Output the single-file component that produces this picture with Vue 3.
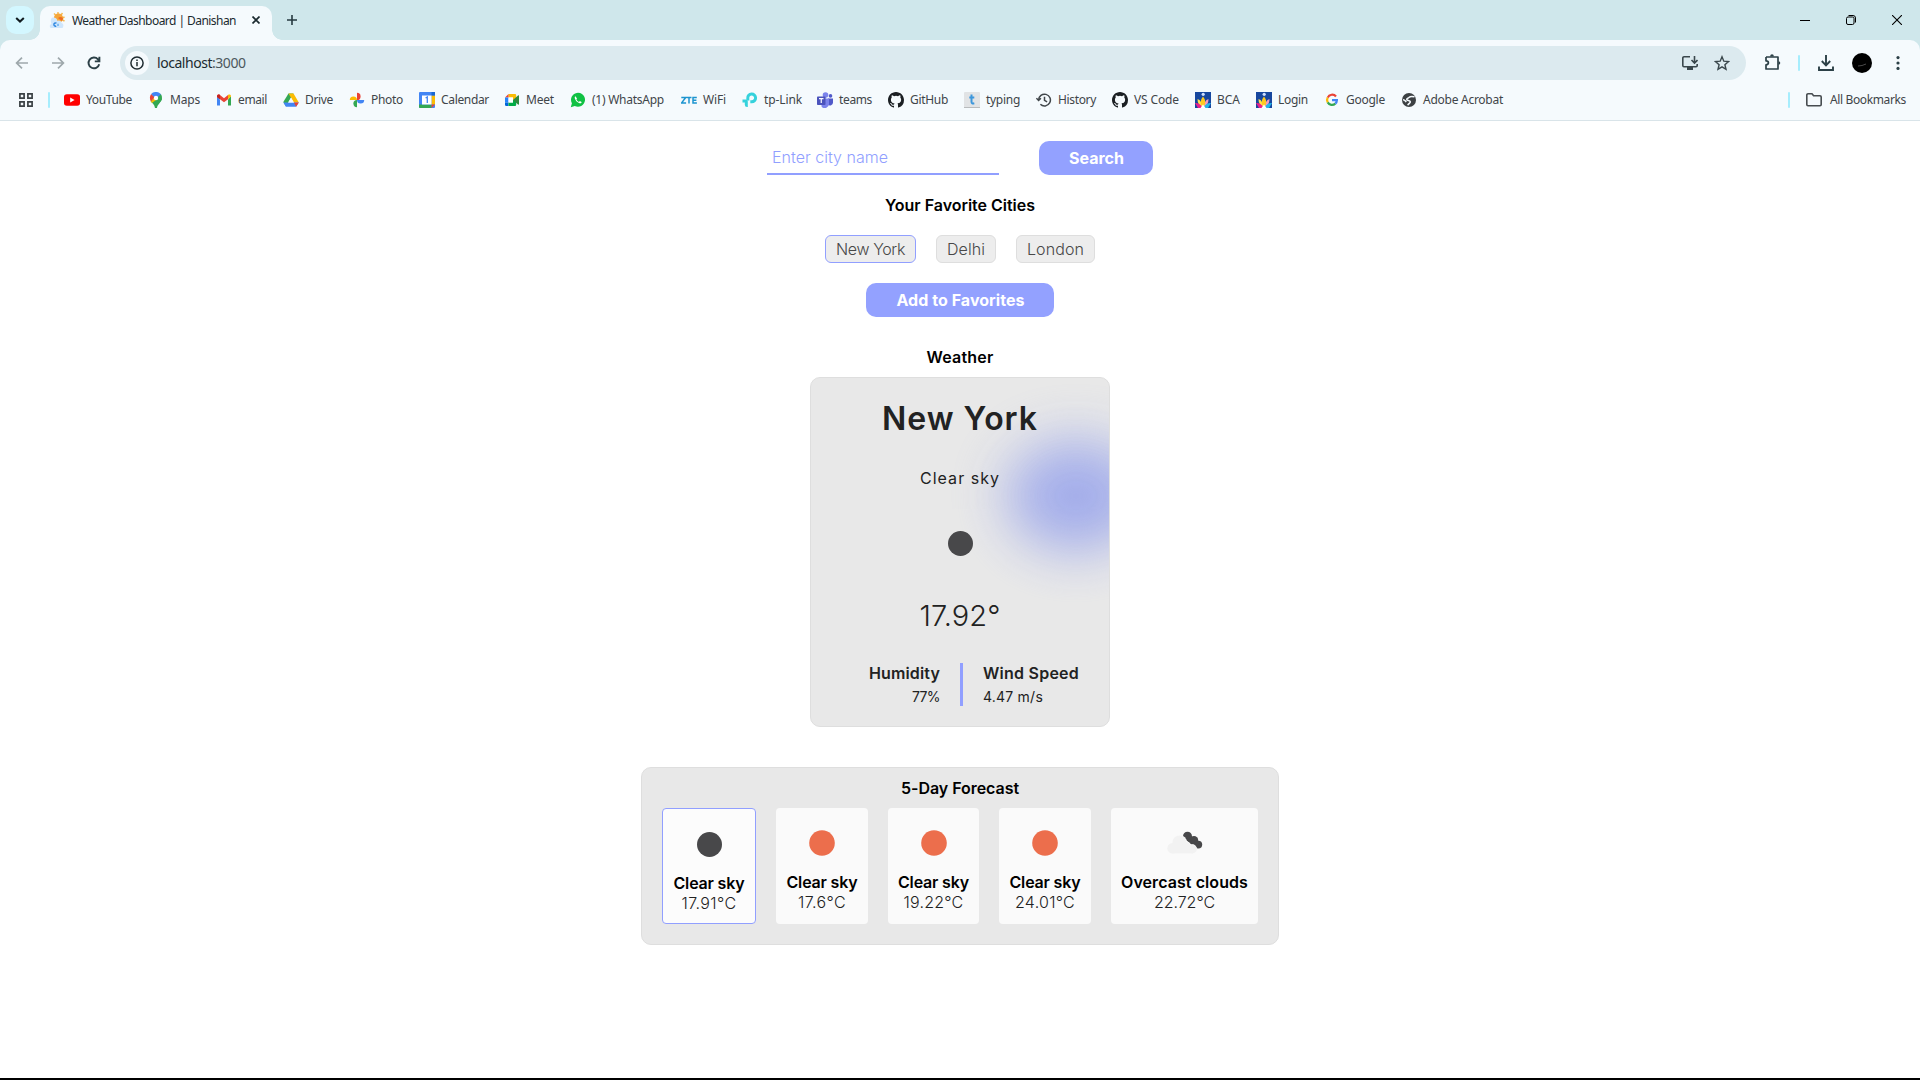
<script setup>
const fitText = (el, width) => {
  el.style.letterSpacing = '0px'
  const range = document.createRange()
  range.selectNodeContents(el)
  const natural = range.getBoundingClientRect().width
  const count = el.textContent.trim().length
  el.style.letterSpacing = ((width - natural) / count).toFixed(3) + 'px'
}
const vFit = {
  mounted(el, binding) {
    fitText(el, binding.value)
    document.fonts.ready.then(() => fitText(el, binding.value))
  },
}

const bookmarks = [
  { icon: 'youtube', label: 'YouTube', width: 84, text: 46 },
  { icon: 'maps', label: 'Maps', width: 68, text: 30 },
  { icon: 'gmail', label: 'email', width: 67, text: 29 },
  { icon: 'drive', label: 'Drive', width: 66, text: 28 },
  { icon: 'photos', label: 'Photo', width: 70, text: 32 },
  { icon: 'calendar', label: 'Calendar', width: 85, text: 48 },
  { icon: 'meet', label: 'Meet', width: 66, text: 28 },
  { icon: 'whatsapp', label: '(1) WhatsApp', width: 111, text: 72 },
  { icon: 'zte', label: 'WiFi', width: 61, text: 23 },
  { icon: 'tplink', label: 'tp-Link', width: 75, text: 38 },
  { icon: 'teams', label: 'teams', width: 71, text: 33 },
  { icon: 'github', label: 'GitHub', width: 76, text: 38 },
  { icon: 'typing', label: 'typing', width: 72, text: 34 },
  { icon: 'history', label: 'History', width: 76, text: 38 },
  { icon: 'github', label: 'VS Code', width: 83, text: 45 },
  { icon: 'college', label: 'BCA', width: 61, text: 23 },
  { icon: 'college', label: 'Login', width: 68, text: 30 },
  { icon: 'google', label: 'Google', width: 77, text: 39 },
  { icon: 'globe', label: 'Adobe Acrobat', width: 110, text: 80 },
]

const cities = [
  { name: 'New York', width: 91, text: 69, active: true },
  { name: 'Delhi', width: 60, text: 38 },
  { name: 'London', width: 79, text: 57 },
]

const days = [
  { icon: 'moon', label: 'Clear sky', temp: '17.91°C', width: 94, text: 71, tempWidth: 55, active: true },
  { icon: 'sun', label: 'Clear sky', temp: '17.6°C', width: 92, text: 71, tempWidth: 48 },
  { icon: 'sun', label: 'Clear sky', temp: '19.22°C', width: 91, text: 71, tempWidth: 60 },
  { icon: 'sun', label: 'Clear sky', temp: '24.01°C', width: 92, text: 71, tempWidth: 60 },
  { icon: 'clouds', label: 'Overcast clouds', temp: '22.72°C', width: 147, text: 127, tempWidth: 61 },
]
</script>

<template>
  <div class="screen">
    <header class="browser">
      <div class="tabstrip">
        <button class="tab-search">
          <svg width="10" height="6" viewBox="0 0 10 6"><path d="M1.2 1l3.8 3.6L8.800 1" fill="none" stroke="#111c20" stroke-width="2" /></svg>
        </button>
        <div class="tab">
          <svg class="favicon" width="16" height="16" viewBox="0 0 16 16">
            <g stroke="#f5b94e" stroke-width="1.4"><path d="M9 0v3M5 1.500l2 2M13.500 1l-1.500 2M15.500 5l-2 1M15.500 9l-2-1" /></g>
            <circle cx="9.500" cy="6" r="4.600" fill="#f6a63a" />
            <path d="M9 6c2-2 5-1 5 1l-1 2z" fill="#ee6c22" />
            <path d="M1.500 16c-1.500-2-.5-3.500 1-4C1 8 2 5.500 4.500 5.500S8 7 8.500 9c2-1 4 0 4 2 2 .3 2.500 3 1 5z" fill="#cfe6fc" />
            <path d="M7.500 11.200c-1.500-.7-2.600.2-2.600 1.400s1.100 1.900 2.300 1.400" fill="none" stroke="#2d86e0" stroke-width="1.400" />
            <path d="M9 11.800v2.200" stroke="#58a8ee" stroke-width="1.300" />
          </svg>
          <span class="tab-title"><span v-fit="164">Weather Dashboard | Danishan</span></span>
          <svg width="8" height="8" viewBox="0 0 8 8"><path d="M.5.5l7 7M7.500.5l-7 7" stroke="#1b2a2f" stroke-width="1.700" /></svg>
        </div>
        <svg class="new-tab" width="10" height="10" viewBox="0 0 10 10"><path d="M5 0v10M0 5h10" stroke="#263a40" stroke-width="1.600" /></svg>
        <div class="window-controls">
          <svg width="10" height="10" viewBox="0 0 10 10"><path d="M0 5.500h10" stroke="#000" /></svg>
          <svg width="10" height="10" viewBox="0 0 10 10" fill="none" stroke="#000"><rect x=".5" y="2" width="7.500" height="7.500" rx="1.500" /><path d="M2.500.5H7a2.500 2.500 0 0 1 2.500 2.500v4.500" /></svg>
          <svg width="10" height="10" viewBox="0 0 10 10"><path d="M0 0l10 10M10 0L0 10" stroke="#000" stroke-width="1.100" /></svg>
        </div>
      </div>

      <div class="toolbar">
        <div class="nav">
          <svg width="16" height="16" viewBox="0 0 16 16" fill="none" stroke="#9ea8ac" stroke-width="1.700"><path d="M14 8H3M8 2.600L2.600 8 8 13.400" /></svg>
          <svg width="16" height="16" viewBox="0 0 16 16" fill="none" stroke="#9ea8ac" stroke-width="1.700"><path d="M2 8h11M8 2.600L13.400 8 8 13.400" /></svg>
          <svg width="16" height="16" viewBox="0 0 16 16" fill="none" stroke="#2c4047" stroke-width="1.900"><path d="M13.200 9.200A5.400 5.400 0 1 1 12 4.300L13.500 6M13.400 1.800v4.600H8.800" /></svg>
        </div>
        <div class="omnibox">
          <span class="site-info">
            <svg width="14" height="14" viewBox="0 0 14 14"><circle cx="7" cy="7" r="6.100" fill="none" stroke="#1f2c31" stroke-width="1.500" /><path d="M7 6v4.300M7 3.500v1.600" stroke="#1f2c31" stroke-width="1.500" /></svg>
          </span>
          <span class="url" v-fit="88.500">localhost<span class="port">:3000</span></span>
          <svg class="install" width="16" height="14" viewBox="0 0 16 14" fill="none" stroke="#3a474c" stroke-width="1.600"><path d="M8 .8H2A1.200 1.200 0 0 0 .8 2v7.500a1.200 1.200 0 0 0 1.200 1.200h12a1.200 1.200 0 0 0 1.200-1.200V8M12.500 0v6.500M9.500 4l3 3 3-3" /><path d="M5 12.500h6" stroke-width="3" /></svg>
          <svg width="16" height="16" viewBox="0 0 16 16"><path d="M8 1.800l1.800 4.400 4.700.4-3.600 3.100 1.100 4.600L8 11.800l-4 2.500 1.100-4.600-3.600-3.100 4.700-.4z" fill="none" stroke="#3a474c" stroke-width="1.400" /></svg>
        </div>
        <svg class="puzzle" width="18" height="18" viewBox="0 0 18 18"><path d="M2 4h4.500M10 4h4v4M14 11v5H2v-4.200c3.200-.2 3.200-3.900 0-4V4M6 4h4M14 8v3" fill="none" stroke="#2c4047" stroke-width="1.700" stroke-linejoin="round" /><path d="M6.200 3.500V3a1.800 1.800 0 0 1 3.600 0v.5zM14.500 8.200a1.800 1.800 0 0 1 0 3.600z" fill="#2c4047" /></svg>
        <i class="divider"></i>
        <svg class="download" width="16" height="16" viewBox="0 0 16 16" fill="none" stroke="#2c4047" stroke-width="1.900"><path d="M8 0v10M3.800 6L8 10.300 12.200 6M1 11.500V15h14v-3.500" /></svg>
        <svg class="avatar" width="20" height="20" viewBox="0 0 20 20"><circle cx="10" cy="10" r="10" /><path d="M6 13q4 0 8-2" stroke="#4a4a4a" fill="none" /></svg>
        <svg class="dots" width="4" height="14" viewBox="0 0 4 14" fill="#2c4047"><circle cx="2" cy="1.600" r="1.600" /><circle cx="2" cy="7" r="1.600" /><circle cx="2" cy="12.400" r="1.600" /></svg>
      </div>

      <nav class="bookmarks">
        <svg class="apps" width="14" height="14" viewBox="0 0 14 14" fill="none" stroke="#3b4246" stroke-width="1.700"><path d="M.9.9h4.200v4.200H.9zM8.900.9h4.200v4.200H8.900zM.9 8.900h4.200v4.200H.9zM8.900 8.900h4.200v4.200H8.900z" /></svg>
        <i class="divider"></i>
        <div class="bookmark-list">
          <a v-for="b in bookmarks" :key="b.label" class="bookmark" :style="{ width: b.width + 'px' }">
            <svg width="16" height="16" viewBox="0 0 16 16">
              <template v-if="b.icon === 'youtube'"><rect y="2.200" width="16" height="11.600" rx="2.800" fill="#f00" /><path d="M6.200 5.500v5L10.600 8z" fill="#fff" /></template>
              <template v-else-if="b.icon === 'maps'">
                <path d="M2.600 9C4 11.300 6.500 12 7 16h2c.4-4 5-6 5-10z" fill="#34a853" />
                <path d="M2.600 9L12.500 1.800C15 4.500 14 8 12 10L8 13z" fill="#34a853" />
                <path d="M3.200 1.900L7 5 3 9.500C1.500 7 1.500 4 3.200 1.900z" fill="#ea4335" />
                <path d="M3 9.500l7.500-8L8 8l-4.200 3z" fill="#fbbc04" />
                <path d="M3.200 1.900C6-1 11-.5 12.800 2.300L8 7 6 5z" fill="#4285f4" />
                <circle cx="8" cy="6" r="2.200" fill="#fff" />
              </template>
              <template v-else-if="b.icon === 'gmail'"><path d="M1 4v9.500h3V7.500z" fill="#4285f4" /><path d="M15 4v9.500h-3V7.500z" fill="#34a853" /><path d="M1 4.500C1 2.500 2.800 2 4 3l4 3.200L12 3v4.200L8 10.200 4 7.200 1 5z" fill="#ea4335" /><path d="M12 3c1.200-1 3-.5 3 1.500L12 7.200z" fill="#fbbc04" /><path d="M1 5v-.5C1 2.500 2.800 2 4 3v4.200z" fill="#c5221f" /></template>
              <template v-else-if="b.icon === 'drive'"><path d="M5.500 1.500h5L3 14.500.3 10z" fill="#34a853" /><path d="M5.500 1.500h5l5.300 9h-5z" fill="#fbbc04" /><path d="M.3 10.500h15.500L13 14.700H3z" fill="#4285f4" /><path d="M8 5.500l2.900 5H5.100z" fill="#f5fafd" /><path d="M10.900 10.500h4.900l-2.600 4.200z" fill="#ea4335" /></template>
              <template v-else-if="b.icon === 'photos'"><path d="M8 8V.8A3.600 3.600 0 0 1 8 8z" fill="#ea4335" /><path d="M8 8h7.200A3.600 3.600 0 0 1 8 8z" fill="#4285f4" /><path d="M8 8v7.200A3.600 3.600 0 0 1 8 8z" fill="#34a853" /><path d="M8 8H.8A3.600 3.600 0 0 1 8 8z" fill="#fbbc04" /></template>
              <template v-else-if="b.icon === 'calendar'"><rect width="16" height="16" rx="1" fill="#4285f4" /><path d="M12.500 3.500H16v9h-3.500z" fill="#fbbc04" /><path d="M0 12.500h12.500V16H1a1 1 0 0 1-1-1z" fill="#34a853" /><path d="M12.500 12.500H16L12.500 16z" fill="#ea4335" /><path d="M12.500 0H16v3.500h-3.500z" fill="#1967d2" /><path d="M3 3.500h9.500v9H3z" fill="#fff" /><path d="M6.600 6l1.700-1v6" fill="none" stroke="#4285f4" stroke-width="1.300" /></template>
              <template v-else-if="b.icon === 'meet'"><path d="M4.500 2H11a1.200 1.200 0 0 1 1.200 1.200V7L9 8V5.500H4.500z" fill="#fbbc04" /><path d="M4.500 2v3.500H1z" fill="#ea4335" /><path d="M1 5.500h3.500v5H1z" fill="#2684fc" /><path d="M1 10.500h3.500V14H2.200A1.200 1.200 0 0 1 1 12.800z" fill="#0066da" /><path d="M4.500 10.500H9V8l3.200-1v5.800A1.200 1.200 0 0 1 11 14H4.500z" fill="#00ac47" /><path d="M9 8l5-4.500c.6-.4 1-.2 1 .4v8.200c0 .6-.4.8-1 .4z" fill="#2f8a3e" /><path d="M4.500 5.500H9v5H4.500z" fill="#fff" /></template>
              <template v-else-if="b.icon === 'whatsapp'"><path d="M.8 15.200l1.100-4A7 7 0 1 1 4.800 14z" fill="#10c143" /><path d="M5.400 4.200c-1.700 1 .2 4.400 2 5.800 2 1.500 4.200 2 4.200 0L9.800 9 9 9.900C7.800 9.400 7 8.500 6.400 7.400l.6-1z" fill="#fff" /></template>
              <template v-else-if="b.icon === 'zte'"><path d="M.3 5.500h4.400L.5 11h4.600M5.500 5.500h5M8 5.500v6M15.800 5.500H12V11h3.900M12 8.200h3.400" fill="none" stroke="#1c94cf" stroke-width="1.500" /></template>
              <template v-else-if="b.icon === 'tplink'"><path d="M5.800 8.500V6.200A3.900 3.900 0 1 1 9.700 9.800H8.300" fill="none" stroke="#35d2dc" stroke-width="3" /><path d="M.5 7.500h3.300a2 2 0 0 1 2 2V15h-.7a2.300 2.300 0 0 1-2.300-2.300V10.600H.5z" fill="#35d2dc" /></template>
              <template v-else-if="b.icon === 'teams'"><circle cx="8.500" cy="3" r="2.800" fill="#7b83eb" /><circle cx="13.500" cy="3.900" r="1.800" fill="#5059c9" /><path d="M11 6.500h5v4.300a3 3 0 0 1-5 2z" fill="#5059c9" /><path d="M4.500 6.500H12v5a4.200 4.200 0 0 1-7.500 3z" fill="#7b83eb" /><rect y="4.500" width="8.500" height="8.500" rx=".8" fill="#4b53bc" /><path d="M2 6.700h4.500M4.250 6.700V11" stroke="#fff" stroke-width="1.200" /></template>
              <template v-else-if="b.icon === 'github'"><path fill="#1b1f23" d="M8 0C3.580 0 0 3.580 0 8c0 3.540 2.290 6.530 5.470 7.590.4.070.55-.17.55-.38 0-.19-.01-.82-.01-1.490-2.010.37-2.530-.49-2.690-.94-.09-.23-.48-.94-.82-1.130-.28-.15-.68-.52-.01-.53.63-.01 1.080.58 1.230.82.72 1.210 1.870.87 2.330.66.07-.52.28-.87.51-1.070-1.780-.2-3.640-.89-3.640-3.950 0-.87.31-1.590.82-2.150-.08-.2-.36-1.020.08-2.120 0 0 .67-.21 2.200.82a7.600 7.600 0 0 1 4 0c1.530-1.040 2.200-.82 2.200-.82.44 1.100.16 1.920.08 2.120.51.56.82 1.270.82 2.150 0 3.070-1.870 3.750-3.650 3.950.29.25.54.73.54 1.480 0 1.070-.01 1.930-.01 2.200 0 .21.15.46.55.38A8 8 0 0 0 16 8c0-4.420-3.580-8-8-8z" /></template>
              <template v-else-if="b.icon === 'typing'"><rect width="16" height="16" rx="1" fill="#e1e3e5" /><path d="M0 15.500h16" stroke="#b8bbbd" /><path d="M7.500 2.500v7.200c0 1.700 1 2 2.800 1.600M5.300 5.500h5" fill="none" stroke="#3c97dc" stroke-width="2" /></template>
              <template v-else-if="b.icon === 'history'"><path d="M2.600 8A5.900 5.900 0 1 1 4.400 12.300M.4 6.200l2.200 2.300 2.300-2.300M8.500 4.700V8.300l2.600 1.600" fill="none" stroke="#40464a" stroke-width="1.500" /></template>
              <template v-else-if="b.icon === 'college'"><path d="M0 0h16v16H0z" fill="#17479e" /><circle cx="8.200" cy="2.300" r="1.600" fill="#cfe0ff" /><path d="M2.500 7c3 1 4.500 4 5 8.500C4 14 2.500 11 2.500 7z" fill="#ffe14d" /><path d="M13.500 7c-3 1-4.500 4-5 8.500 3.500-1.500 5-4.500 5-8.500z" fill="#f59ac0" /><path d="M8 4.500c3 4 3 7 0 11-3-4-3-7 0-11z" fill="#ffcb1f" /><path d="M0 11c3 0 6 1 7.500 5H3z" fill="#e9208c" /><path d="M16 11c-3 0-6 1-7.500 5H13z" fill="#22b5e8" /><path d="M5.500 16L8 12.500l2.500 3.500z" fill="#fff" /></template>
              <template v-else-if="b.icon === 'google'"><g fill="none" stroke-width="2.200"><path d="M12 4.500A4.900 4.900 0 0 0 3.700 5.600" stroke="#ea4335" /><path d="M3.700 5.600a5 5 0 0 0 0 4.800" stroke="#fbbc04" /><path d="M3.700 10.400a4.900 4.900 0 0 0 7.600 1.200" stroke="#34a853" /><path d="M11.300 11.600C12.500 10.500 12.900 9.500 12.900 8.200H8" stroke="#4285f4" /></g></template>
              <template v-else><circle cx="8" cy="8" r="7" fill="#3c4043" /><path d="M13.500 4.800C11 4.300 9.500 4 8.300 5.200 7 6.500 5.500 6 5.800 7.600c.3 1.300 3.300.5 3.500 2.300.1 1.300-1.800 1.300-2.500 3.300M2 7.700c1.800 0 2.300 1.300 3.300 2.300" fill="none" stroke="#f5fafd" stroke-width="1.600" /></template>
            </svg>
            <span v-fit="b.text">{{ b.label }}</span>
          </a>
        </div>
        <i class="divider"></i>
        <svg class="folder" width="16" height="14" viewBox="0 0 16 14"><path d="M.8 2A1.200 1.200 0 0 1 2 .8h4l1.600 2H14a1.200 1.200 0 0 1 1.200 1.200v7.500A1.200 1.200 0 0 1 14 12.700H2a1.200 1.200 0 0 1-1.200-1.200z" fill="none" stroke="#474c50" stroke-width="1.600" /></svg>
        <span class="all" v-fit="76">All Bookmarks</span>
      </nav>
    </header>

    <main class="page">
      <div class="search-row">
        <div class="city-input"><span v-fit="116">Enter city name</span></div>
        <button class="primary search"><span v-fit="55">Search</span></button>
      </div>
      <h2 class="heading"><span v-fit="150">Your Favorite Cities</span></h2>
      <div class="cities">
        <span v-for="c in cities" :key="c.name" class="chip" :class="{ active: c.active }" :style="{ width: c.width + 'px' }"><span v-fit="c.text">{{ c.name }}</span></span>
      </div>
      <button class="primary add"><span v-fit="128">Add to Favorites</span></button>

      <h2 class="heading weather-heading"><span v-fit="67">Weather</span></h2>
      <section class="card">
        <div class="glow"></div>
        <h1 class="city"><span v-fit="156">New York</span></h1>
        <p class="desc"><span v-fit="80">Clear sky</span></p>
        <svg class="moon" width="25" height="25" viewBox="0 0 25 25"><circle cx="12.500" cy="12.500" r="12.500" fill="#48484a" /></svg>
        <p class="temp"><span v-fit="81">17.92°</span></p>
        <div class="stats">
          <div class="stat right"><b v-fit="71">Humidity</b><span v-fit="28">77%</span></div>
          <div class="stat"><b v-fit="96">Wind Speed</b><span v-fit="60">4.47 m/s</span></div>
        </div>
      </section>

      <section class="forecast">
        <h2 class="heading"><span v-fit="118">5-Day Forecast</span></h2>
        <div class="days">
          <article v-for="(d, i) in days" :key="i" class="day" :class="{ active: d.active }" :style="{ width: d.width + 'px' }">
            <svg width="50" height="50" viewBox="0 0 50 50">
              <circle v-if="d.icon === 'moon'" cx="25.500" cy="25.500" r="12.500" fill="#48484a" />
              <circle v-else-if="d.icon === 'sun'" cx="25" cy="25" r="12.800" fill="#ec6e4c" />
              <template v-else>
                <g fill="#48484a"><circle cx="27.500" cy="18.300" r="4.500" /><circle cx="34" cy="22.300" r="4.200" /><circle cx="38.300" cy="26.600" r="3.900" /><path d="M25 21l5-4 10 9-5 4z" /></g>
                <g fill="#fafafa"><circle cx="19.500" cy="24.500" r="7.500" /><circle cx="26" cy="28.500" r="5.200" /><circle cx="32" cy="31.200" r="4.900" /></g>
                <g fill="#f2f2f2"><circle cx="12.500" cy="30.200" r="5.200" /><circle cx="19.300" cy="24.200" r="6.800" /><circle cx="26" cy="28.500" r="4.500" /><circle cx="32.500" cy="31" r="4.400" /><path d="M12.500 27h20v8.400h-20z" /></g>
              </template>
            </svg>
            <b><span v-fit="d.text">{{ d.label }}</span></b>
            <p><span v-fit="d.tempWidth">{{ d.temp }}</span></p>
          </article>
        </div>
      </section>
    </main>
    <footer class="edge"></footer>
  </div>
</template>

<style>
body { margin: 0; background: #fff; overflow: hidden; }
</style>

<style scoped>
* { box-sizing: border-box; margin: 0; padding: 0; }
svg { flex: none; display: block; }
button { border: 0; }
.screen { width: 1920px; height: 1080px; display: flex; flex-direction: column; background: #fff; white-space: nowrap; overflow: hidden; }

.browser { flex: none; height: 121px; background: #cfe7eb; border-bottom: 1px solid #d9e4e9; font-family: "Noto Sans", "Open Sans", sans-serif; font-size: 12px; color: #3f4549; }
.tabstrip { height: 40px; display: flex; padding: 6px 0 0 6px; }
.tab-search { width: 28px; height: 28px; border-radius: 10px; background: #d3f7ff; display: flex; align-items: center; justify-content: center; }
.tab { position: relative; width: 232px; height: 34px; margin-left: 6px; padding: 0 12px 6px 9px; border-radius: 10px 10px 0 0; background: #f5fafd; display: flex; align-items: center; }
.tab::before, .tab::after { content: ""; position: absolute; bottom: 0; width: 10px; height: 10px; }
.tab::before { left: -10px; background: radial-gradient(circle at 0 0, transparent 9.500px, #f5fafd 10px); }
.tab::after { right: -10px; background: radial-gradient(circle at 100% 0, transparent 9.500px, #f5fafd 10px); }
.favicon { margin-right: 7px; }
.tab-title { width: 180px; color: #1b2a2f; line-height: 18px; padding-top: 1px; }
.new-tab { margin: 9px 0 0 15px; }
.window-controls { margin: 9px 18px 0 auto; display: flex; gap: 36px; }

.toolbar { height: 44px; border-radius: 10px 10px 0 0; background: #f5fafd; display: flex; align-items: center; padding: 2px 20px 0 14px; }
.nav { display: flex; gap: 20px; }
.omnibox { width: 1626px; height: 34px; margin-left: 18px; border-radius: 17px; background: #dceaef; display: flex; align-items: center; padding: 0 16px 0 5px; }
.site-info { width: 24px; height: 24px; border-radius: 12px; background: #f5fafd; display: flex; align-items: center; justify-content: center; }
.url { margin-left: 8px; font-size: 14px; line-height: 20px; color: #1b2a2f; }
.port { color: #4c585d; }
.install { margin: 0 16px 0 auto; }
.divider { width: 2px; height: 16px; border-radius: 1px; background: #a6edfd; flex: none; }
.puzzle { margin: -2px 16px 0 18px; }
.download { margin-left: 18px; }
.avatar { margin-left: 18px; }
.dots { margin-left: 24px; }

.bookmarks { height: 36px; background: #f5fafd; display: flex; align-items: center; padding: 0 14px 4px 19px; }
.apps { margin-right: 15px; }
.bookmark-list { display: flex; flex: 1; margin-left: 14px; }
.bookmark { display: flex; align-items: center; gap: 6px; flex: none; line-height: 18px; }
.folder { margin: 0 8px 0 16px; }
.all { line-height: 18px; }

.page { flex: 1; display: flex; flex-direction: column; align-items: center; padding-top: 20px; font-family: "Inter", "Liberation Sans", sans-serif; font-size: 16px; line-height: 20px; color: #000; }
.search-row { display: flex; gap: 40px; }
.city-input { width: 232px; height: 34px; border-bottom: 2px solid #919fff; padding: 6px 5px; font-weight: 300; color: #919fff; }
.primary { height: 34px; border-radius: 10px; background: #93a1ff; color: #fff; font: inherit; font-weight: 700; padding-left: 1px; }
.search { width: 114px; }
.heading { margin-top: 20px; font-size: 16px; font-weight: 600; line-height: 20px; height: 20px; }
.cities { display: flex; gap: 20px; margin-top: 20px; }
.chip { height: 28px; border: 1px solid #dedede; border-radius: 6px; background: #ededed; color: #484848; font-weight: 300; line-height: 26px; text-align: center; }
.chip.active { border-color: #919fff; }
.add { width: 188px; margin-top: 20px; }
.weather-heading { margin-top: 30px; }

.card { position: relative; overflow: hidden; width: 300px; height: 350px; margin-top: 10px; border: 1px solid #dedede; border-radius: 10px; background: #e8e8e8; color: #222; display: flex; flex-direction: column; align-items: center; padding-top: 21px; }
.card > * { position: relative; }
.card .glow { position: absolute; left: 196px; top: 63px; width: 138px; height: 110px; border-radius: 50%; background: #9da8eb; filter: blur(27px); opacity: .92; }
.city { font-size: 32px; font-weight: 600; line-height: 40px; }
.desc { margin-top: 29px; }
.moon { margin-top: 43px; }
.temp { margin-top: 40px; font-size: 29px; font-weight: 300; line-height: 40px; }
.stats { margin-top: 27px; width: 298px; display: flex; }
.stat { display: flex; flex-direction: column; align-items: flex-start; gap: 4px; width: 149px; height: 43px; padding-left: 20px; border-left: 3px solid #919fff; font-size: 14px; }
.stat b { font-size: 16px; font-weight: 600; }
.stat.right { align-items: flex-end; padding: 0 20px 0 0; border: 0; }

.forecast { width: 638px; height: 178px; margin-top: 40px; border: 1px solid #dedede; border-radius: 10px; background: #e8e8e8; display: flex; flex-direction: column; align-items: center; padding: 10px 20px 20px; }
.forecast .heading { margin: 0 0 10px; }
.days { display: flex; gap: 20px; }
.day { height: 116px; border-radius: 4px; background: #fafafa; display: flex; flex-direction: column; align-items: center; padding-top: 10px; }
.day.active { border: 1px solid #919fff; background: #fcfcfc; }
.day b { font-weight: 600; margin-top: 4px; }
.day p { font-weight: 300; color: #222; }

.edge { height: 2px; background: #000; }
</style>
